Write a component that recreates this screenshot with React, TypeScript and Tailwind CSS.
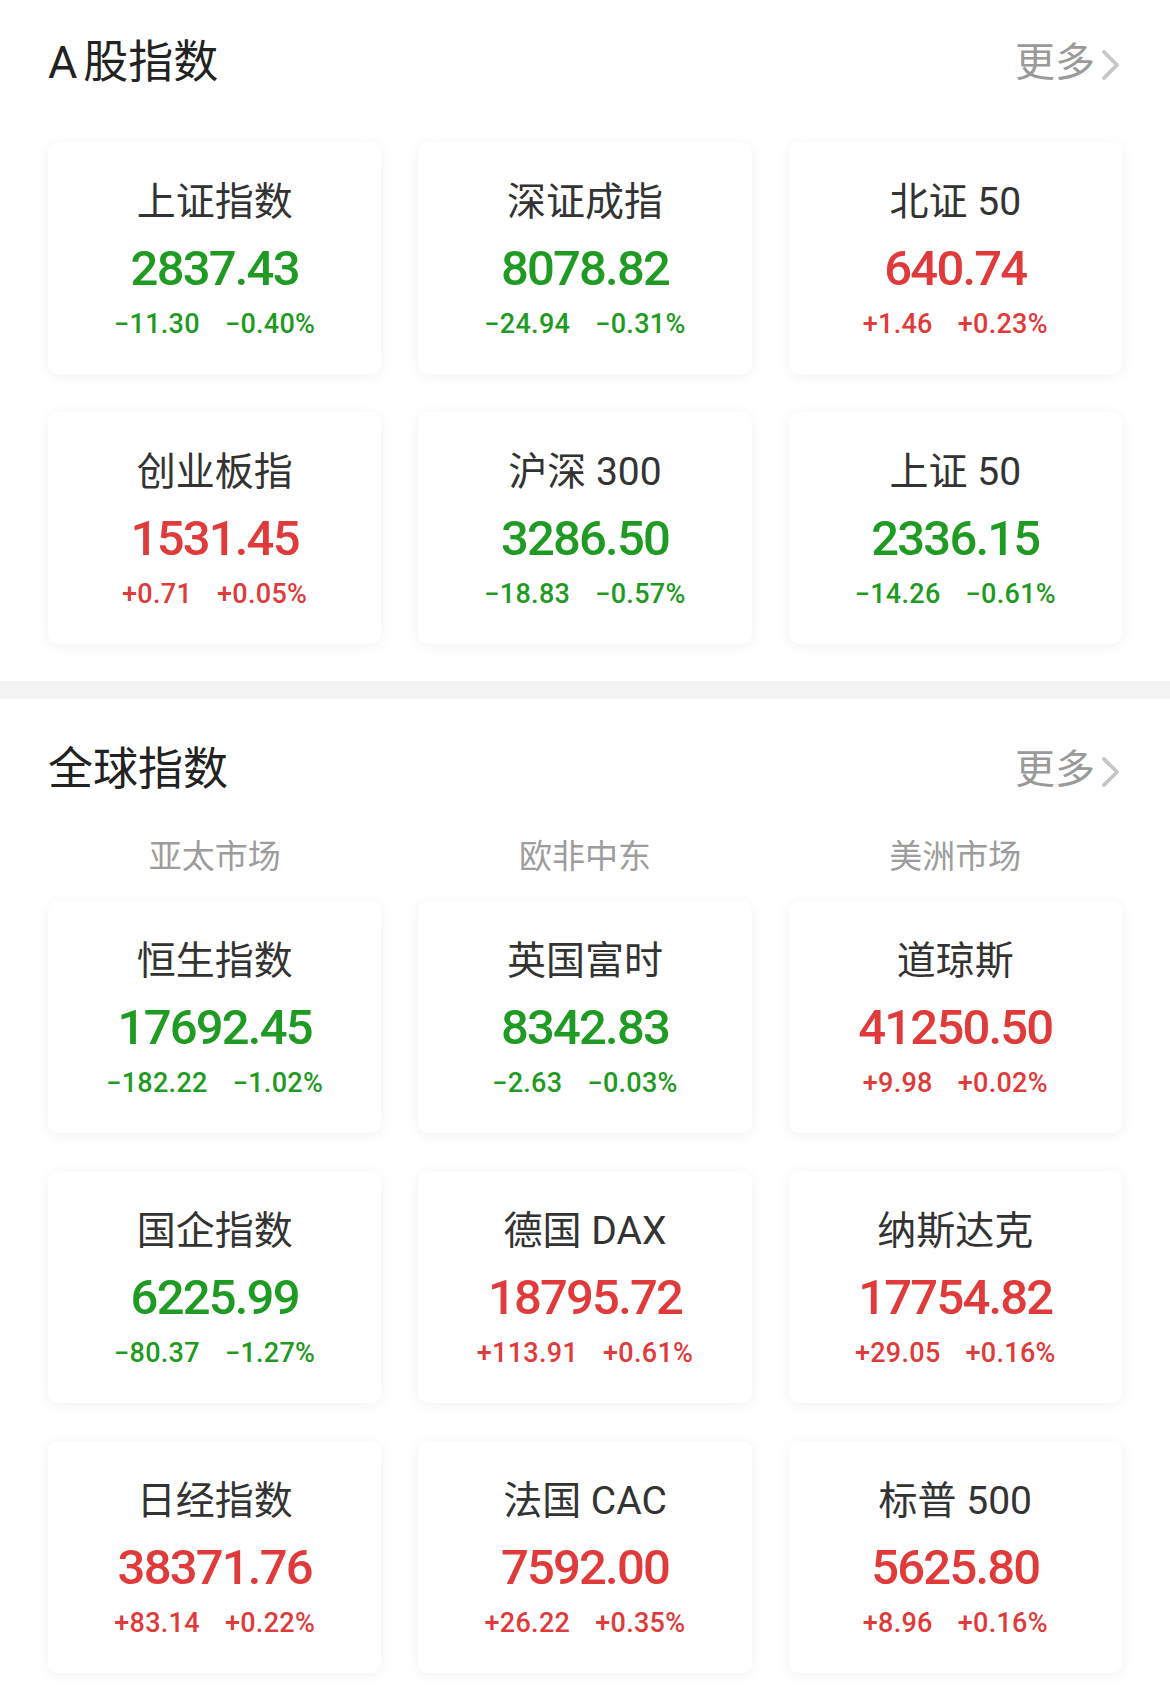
import React from "react";

type Item = { name: string; value: string; change: string; pct: string; up: boolean };

const aShares: Item[] = [
  { name: "上证指数", value: "2837.43", change: "−11.30", pct: "−0.40%", up: false },
  { name: "深证成指", value: "8078.82", change: "−24.94", pct: "−0.31%", up: false },
  { name: "北证 50", value: "640.74", change: "+1.46", pct: "+0.23%", up: true },
  { name: "创业板指", value: "1531.45", change: "+0.71", pct: "+0.05%", up: true },
  { name: "沪深 300", value: "3286.50", change: "−18.83", pct: "−0.57%", up: false },
  { name: "上证 50", value: "2336.15", change: "−14.26", pct: "−0.61%", up: false },
];

const globals: Item[] = [
  { name: "恒生指数", value: "17692.45", change: "−182.22", pct: "−1.02%", up: false },
  { name: "英国富时", value: "8342.83", change: "−2.63", pct: "−0.03%", up: false },
  { name: "道琼斯", value: "41250.50", change: "+9.98", pct: "+0.02%", up: true },
  { name: "国企指数", value: "6225.99", change: "−80.37", pct: "−1.27%", up: false },
  { name: "德国 DAX", value: "18795.72", change: "+113.91", pct: "+0.61%", up: true },
  { name: "纳斯达克", value: "17754.82", change: "+29.05", pct: "+0.16%", up: true },
  { name: "日经指数", value: "38371.76", change: "+83.14", pct: "+0.22%", up: true },
  { name: "法国 CAC", value: "7592.00", change: "+26.22", pct: "+0.35%", up: true },
  { name: "标普 500", value: "5625.80", change: "+8.96", pct: "+0.16%", up: true },
];

const font = { fontFamily: 'Roboto, "Noto Sans CJK SC", sans-serif' };

function Card({ item }: { item: Item }) {
  const color = item.up ? "text-[#e03a3a]" : "text-[#1f9a22]";
  return (
    <div className="h-[232px] rounded-[10px] bg-white shadow-[0_2px_14px_rgba(0,0,0,0.06)] flex flex-col items-center pt-[38px]">
      <div className="h-[44px] leading-[44px] text-[39px] text-[#333333] whitespace-pre">{item.name}</div>
      <div className={`mt-[17px] h-[56px] leading-[56px] text-[49px] font-medium tracking-[-1.8px] ${color}`}>
        {item.value}
      </div>
      <div className={`mt-[12px] h-[30px] leading-[30px] text-[27px] font-medium tracking-[0.3px] flex gap-[25px] ${color}`}>
        <span>{item.change}</span>
        <span>{item.pct}</span>
      </div>
    </div>
  );
}

function Header({ title }: { title: React.ReactNode }) {
  return (
    <div className="h-[50px] px-[48px] flex items-center justify-between">
      <div className="text-[45px] leading-[50px] text-[#222222] flex items-center">{title}</div>
      <div className="flex items-center gap-[6px] pr-[2px]">
        <span className="text-[40px] leading-[50px] text-[#9a9a9a]">更多</span>
        <svg width="19" height="32" viewBox="0 0 19 32" className="mt-[4px]">
          <polyline points="3,3 16,16 3,29" fill="none" stroke="#c6c6c6" strokeWidth="3.8" strokeLinecap="round" strokeLinejoin="round" />
        </svg>
      </div>
    </div>
  );
}

export default function App() {
  return (
    <div className="w-[1170px] min-h-[1708px] bg-white" style={font}>
      <section className="pt-[38px] pb-[37px]">
        <Header
          title={
            <>
              <span>A</span>
              <span className="ml-[6px]">股指数</span>
            </>
          }
        />
        <div className="mt-[54px] px-[48px] grid grid-cols-3 gap-x-[37px] gap-y-[38px]">
          {aShares.map((it) => (
            <Card key={it.name} item={it} />
          ))}
        </div>
      </section>
      <div className="h-[18px] bg-[#f3f3f3]" />
      <section className="pt-[46px] pb-[35px]">
        <Header title="全球指数" />
        <div className="mt-[42px] px-[48px] grid grid-cols-3 gap-x-[37px] h-[40px]">
          {["亚太市场", "欧非中东", "美洲市场"].map((s) => (
            <div key={s} className="text-center text-[33px] leading-[40px] text-[#9d9d9d]">
              {s}
            </div>
          ))}
        </div>
        <div className="mt-[24px] px-[48px] grid grid-cols-3 gap-x-[37px] gap-y-[38px]">
          {globals.map((it) => (
            <Card key={it.name} item={it} />
          ))}
        </div>
      </section>
    </div>
  );
}
